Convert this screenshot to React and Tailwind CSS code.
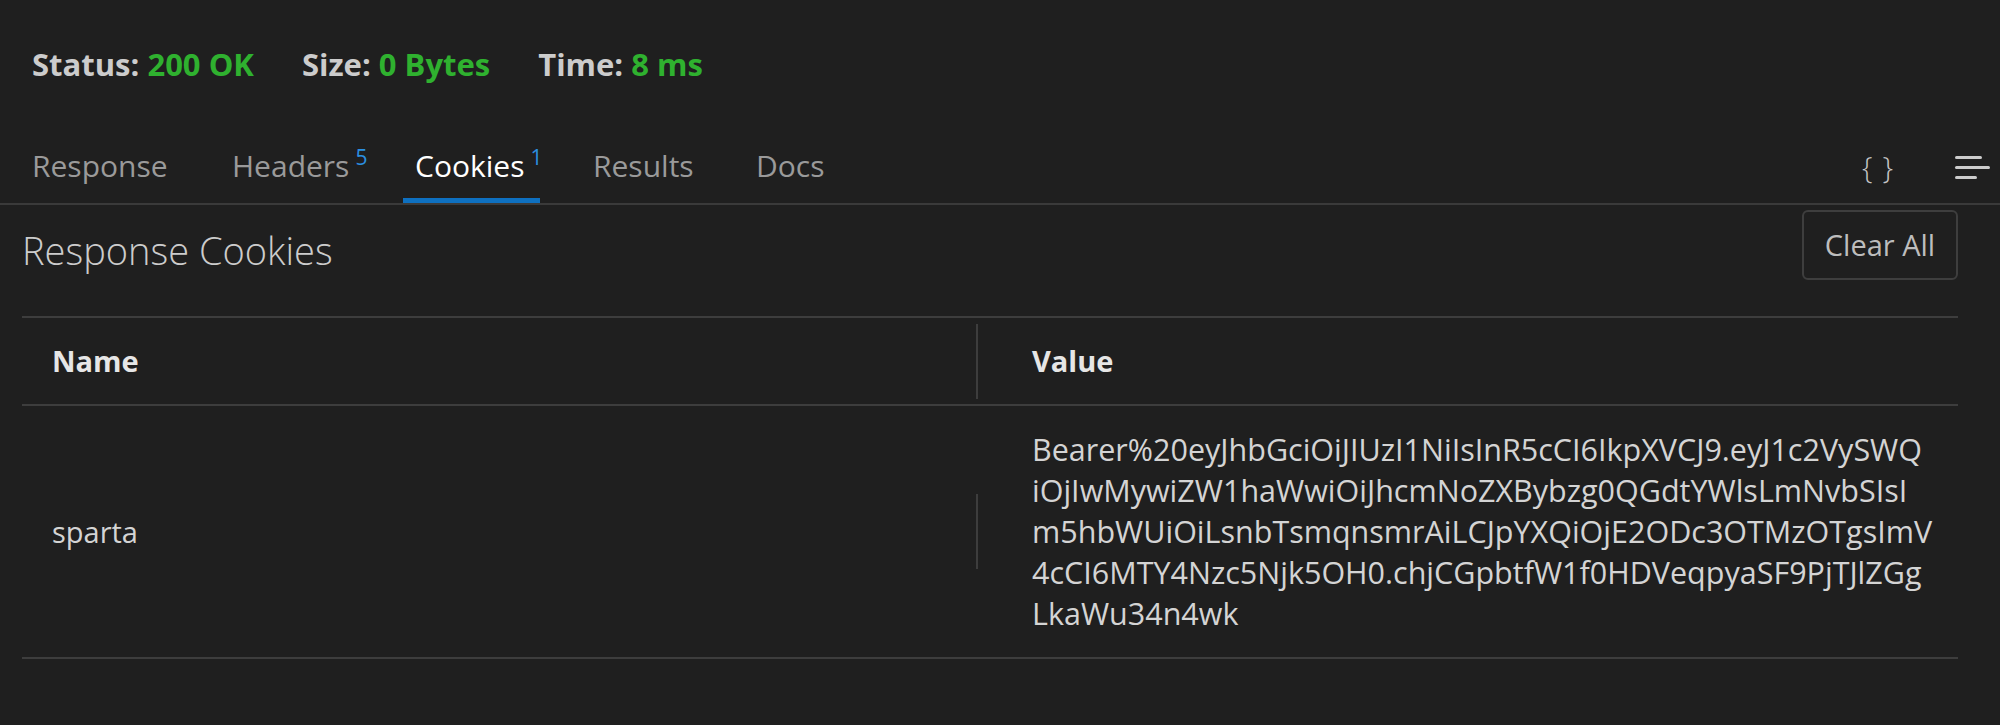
const tabs = [
  { label: 'Response', className: 'w-[160px]' },
  { label: 'Headers', badge: '5', className: 'ml-[40px] w-[163px]' },
  { label: 'Cookies', badge: '1', className: 'ml-[20px] w-[137px]', active: true },
  { label: 'Results', className: 'ml-[41px] w-[124px]' },
  { label: 'Docs', className: 'ml-[39px] w-[95px]' },
];

const valueLines = [
  'Bearer%20eyJhbGciOiJIUzI1NiIsInR5cCI6IkpXVCJ9.eyJ1c2VySWQ',
  'iOjIwMywiZW1haWwiOiJhcmNoZXBybzg0QGdtYWlsLmNvbSIsI',
  'm5hbWUiOiLsnbTsmqnsmrAiLCJpYXQiOjE2ODc3OTMzOTgsImV',
  '4cCI6MTY4Nzc5Njk5OH0.chjCGpbtfW1f0HDVeqpyaSF9PjTJlZGg',
  'LkaWu34n4wk',
];

function StatusItem({ label, value, className = '' }) {
  return (
    <span className={`font-bold ${className}`}>
      <span className="text-[#cccccc]">{label}</span>{' '}
      <span className="text-[#2fb12f]">{value}</span>
    </span>
  );
}

function Tab({ label, badge, active, className }) {
  return (
    <div
      className={`flex items-center pl-[12px] pt-[5px] border-b-[5px] ${
        active ? 'border-[#0e70c0] text-white' : 'border-transparent text-[#9a9a9a]'
      } ${className}`}
    >
      <span>{label}</span>
      {badge && (
        <span className="self-start mt-[14px] ml-[6px] text-[21px] leading-none text-[#2b8fe0]">
          {badge}
        </span>
      )}
    </div>
  );
}

function JsonIcon() {
  return (
    <span className="text-[30px] leading-none text-[#c5c5c5] tracking-[1px] font-light">{'{ }'}</span>
  );
}

function WrapIcon() {
  return (
    <svg width="36" height="24" viewBox="0 0 36 24" className="text-[#cccccc]">
      <rect x="1" y="1" width="27" height="3" rx="1.5" fill="currentColor" />
      <rect x="1" y="11" width="35" height="3" rx="1.5" fill="currentColor" />
      <rect x="1" y="21" width="22" height="3" rx="1.5" fill="currentColor" />
    </svg>
  );
}

export default function App() {
  return (
    <div className="w-[2000px] h-[725px] overflow-hidden bg-[#1f1f1f] text-[#cccccc] font-['Open_Sans','Noto_Sans',sans-serif]">
      {/* status bar */}
      <div className="h-[128px] flex items-center pl-[32px] text-[31px]">
        <StatusItem label="Status:" value="200 OK" />
        <StatusItem label="Size:" value="0 Bytes" className="ml-[48px]" />
        <StatusItem label="Time:" value="8 ms" className="ml-[48px]" />
      </div>

      {/* tabs */}
      <div className="h-[77px] flex items-stretch pl-[20px] pr-[10px] border-b-2 border-[#3a3a3a] text-[30px]">
        {tabs.map((t) => (
          <Tab key={t.label} {...t} />
        ))}
        <div className="ml-auto flex items-center gap-[60px] pt-[2px]">
          <JsonIcon />
          <WrapIcon />
        </div>
      </div>

      {/* cookies panel */}
      <div className="pl-[22px] pr-[42px]">
        <div className="flex items-start justify-between pt-[5px]">
          <h2 className="mt-[21px] text-[38px] font-light leading-none text-[#cccccc]">Response Cookies</h2>
          <button className="h-[70px] w-[156px] rounded-[6px] border-2 border-[#3e3e3e] text-[29px] text-[#bdbdbd]">
            Clear All
          </button>
        </div>

        <div className="mt-[36px] border-t-2 border-[#3d3d3d]">
          <div className="flex h-[88px] border-b-2 border-[#3d3d3d] text-[29px] font-bold text-[#e6e6e6]">
            <div className="w-[954px] pl-[30px] flex items-center">Name</div>
            <div className="w-[2px] h-[75px] self-center bg-[#3d3d3d]" />
            <div className="flex-1 pl-[54px] flex items-center">Value</div>
          </div>
          <div className="flex border-b-2 border-[#3d3d3d] text-[30.5px] text-[#d4d4d4]">
            <div className="w-[954px] pl-[30px] flex items-center text-[29px]">sparta</div>
            <div className="w-[2px] h-[75px] self-center bg-[#3d3d3d]" />
            <div className="flex-1 pl-[54px] py-[23px] leading-[41px]">
              {valueLines.map((line) => (
                <div key={line}>{line}</div>
              ))}
            </div>
          </div>
        </div>
      </div>
    </div>
  );
}
